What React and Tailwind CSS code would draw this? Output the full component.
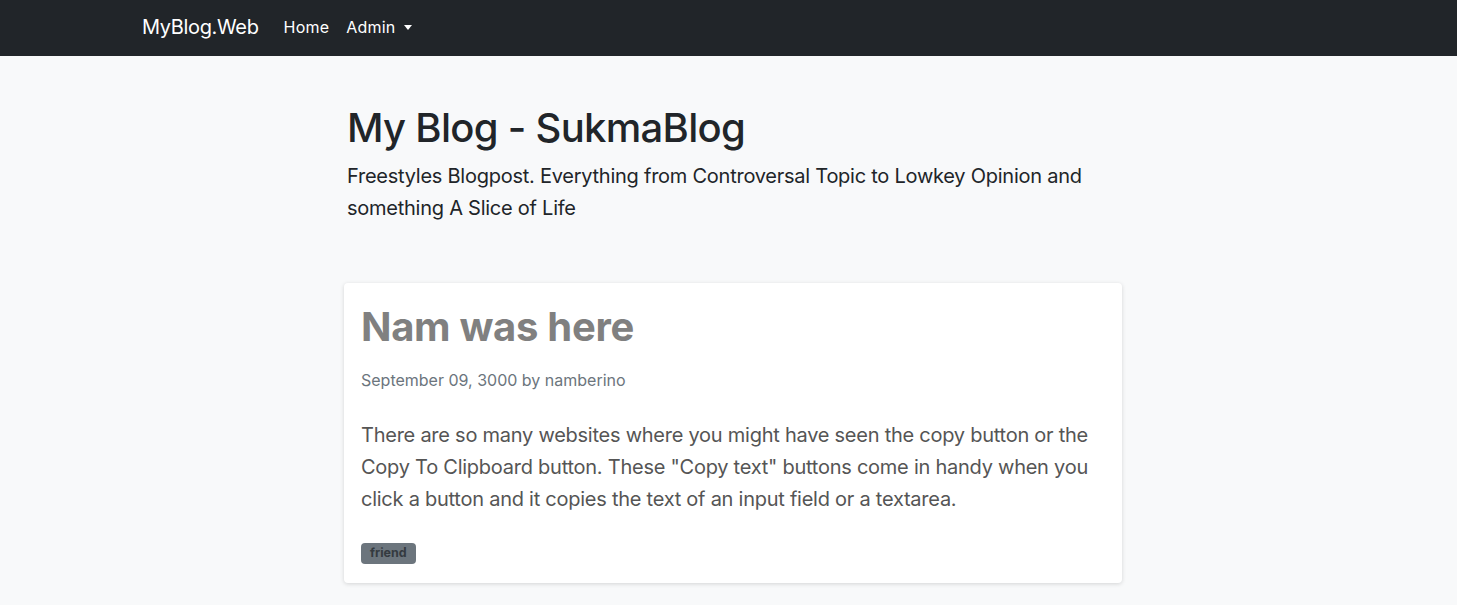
import React from 'react';

const Navbar = () => (
  <nav className="h-[56px] bg-[#212529] flex items-center pl-[142px] pb-[2px]">
    <a className="text-[20px] text-white mr-[25px] tracking-[-0.35px]">MyBlog.Web</a>
    <a className="text-[16px] text-white mr-[17px] tracking-[0.2px]">Home</a>
    <a className="text-[16px] text-white flex items-center tracking-[0.2px]">
      Admin
      <span className="ml-[9px] w-0 h-0 border-l-[4px] border-r-[4px] border-t-[5px] border-l-transparent border-r-transparent border-t-white" />
    </a>
  </nav>
);

const PostCard = ({ post }) => (
  <div className="bg-white rounded-[4px] shadow-[0_1px_4px_rgba(0,0,0,0.15)] px-[17px] pt-[20px] pb-[19px]">
    <h2 className="text-[40px] leading-[1.2] font-bold text-[#808080] tracking-[-0.3px]">{post.title}</h2>
    <p className="mt-[17px] text-[16px] leading-[24px] text-[#6c757d]">
      {post.date} by {post.author}
    </p>
    <p className="mt-[27px] text-[20px] leading-[32px] text-[#555] tracking-[-0.25px]">{post.body}</p>
    <div className="mt-[28px] flex gap-1">
      {post.tags.map((tag) => (
        <span
          key={tag}
          className="inline-flex items-center h-[21px] bg-[#6c757d] text-[#343a40] text-[12.5px] font-bold px-[9px] rounded-[4px]"
        >
          {tag}
        </span>
      ))}
    </div>
  </div>
);

const App = () => {
  const post = {
    title: 'Nam was here',
    date: 'September 09, 3000',
    author: 'namberino',
    body: 'There are so many websites where you might have seen the copy button or the Copy To Clipboard button. These "Copy text" buttons come in handy when you click a button and it copies the text of an input field or a textarea.',
    tags: ['friend'],
  };

  return (
    <div className="min-h-screen bg-[#f8f9fa] text-[#212529] font-['Inter',sans-serif]">
      <Navbar />
      <main className="w-[778px] ml-[344px] pb-10">
        {/* Header */}
        <header className="pl-[3px] pt-[48px]">
          <h1 className="text-[40px] leading-[48px] font-medium tracking-[-0.7px]">My Blog - SukmaBlog</h1>
          <p className="mt-[8px] text-[20px] leading-[32px] w-[750px] tracking-[-0.25px]">
            Freestyles Blogpost. Everything from Controversal Topic to Lowkey Opinion and something A Slice of Life
          </p>
        </header>

        {/* Posts */}
        <section className="mt-[59px]">
          <PostCard post={post} />
        </section>
      </main>
    </div>
  );
};

export default App;
